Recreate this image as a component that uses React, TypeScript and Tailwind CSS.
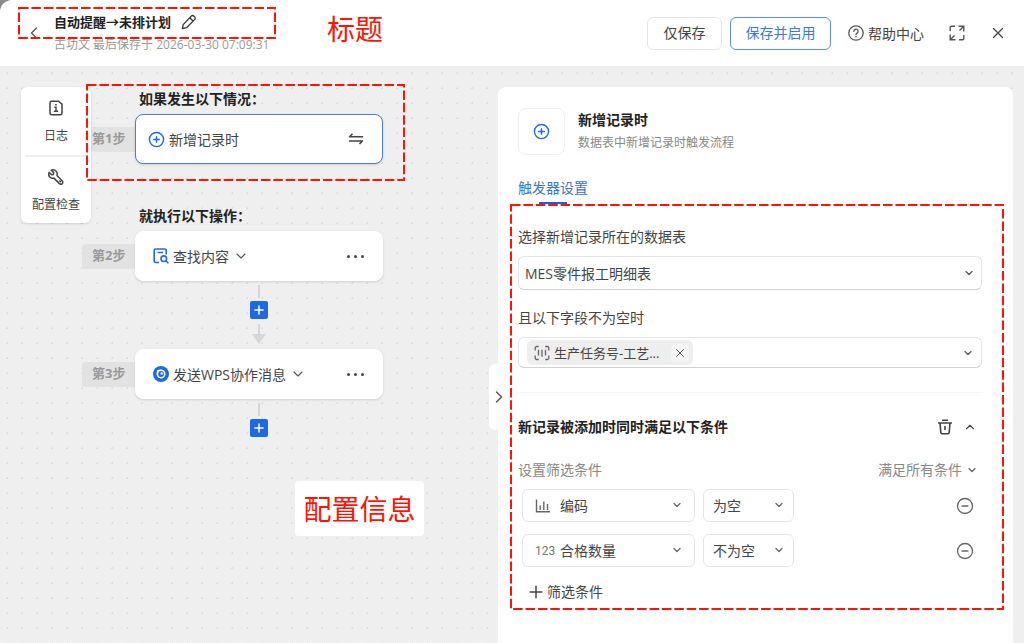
import type { ReactNode } from 'react';
import { ChevronDown, ChevronLeft, ChevronRight, ChevronUp, CircleMinus, CirclePlus, Plus, X } from 'lucide-react';

interface Condition {
  id: string;
  field: string;
  operator: string;
  icon: ReactNode;
}

function PencilIcon() {
  return (
    <svg className="w-4 h-4" viewBox="0 0 16 16" fill="none" stroke="#333" strokeWidth="1.3" strokeLinejoin="round">
      <path d="M1.4 14.6 2.2 10.6 10.4 2a1.6 1.6 0 0 1 2.3 0l1.1 1.1a1.6 1.6 0 0 1 0 2.3L5.5 13.7 1.4 14.6ZM8.8 3.8l3.2 3.2" />
    </svg>
  );
}

function HelpIcon() {
  return (
    <svg className="w-4 h-4" viewBox="0 0 16 16" fill="none" stroke="#555" strokeWidth="1.3" strokeLinecap="round">
      <circle cx="8" cy="8" r="7.2" />
      <path d="M5.9 6.4a2.1 2.1 0 1 1 3.2 1.7c-.7.5-1.1.8-1.1 1.5" />
      <path d="M8 11.5v.2" strokeWidth="1.5" />
    </svg>
  );
}

function ExpandIcon() {
  return (
    <svg className="w-4 h-4" viewBox="0 0 16 16" fill="none" stroke="#555" strokeWidth="1.4">
      <path d="M1.2 6V2.2a1 1 0 0 1 1-1H6M9.5 1.2h5.3v5.3M14.8 1.2 10.500 5.500M14.8 10v3.800a1 1 0 0 1-1 1H10M6.5 14.8H1.2V9.5M1.2 14.8 5.500 10.500" />
    </svg>
  );
}

function LogIcon() {
  return (
    <svg className="w-4 h-4" viewBox="0 0 16 16" fill="none" stroke="#444" strokeWidth="1.5">
      <path d="M3.5 1.2h7l3.5 3v9a1.5 1.5 0 0 1-1.5 1.5h-9A1.5 1.5 0 0 1 2 13.200V2.700a1.500 1.500 0 0 1 1.500-1.500Z" />
      <path d="M6.300 7.200H8v4M5.800 11.300h4.400M7.200 4.700h1.600" strokeWidth="1.400" />
    </svg>
  );
}

function WrenchIcon() {
  return (
    <svg className="w-4 h-4" viewBox="0 0 16 16" fill="none" stroke="#444" strokeWidth="1.5" strokeLinejoin="round">
      <path d="M3.300 1.200 5.700 3.600 5.400 5.400 3.600 5.700 1.200 3.300C.300 5.600.900 7.500 2.400 8.500c1 .8 2.300.9 3.500.6l5.500 5.500a1.900 1.900 0 0 0 2.900-2.700L9 6.400c.5-1.500.3-3-.8-4.100C6.900.9 5 .5 3.300 1.200Z" />
      <path d="m11.800 12 .6.600" strokeLinecap="round" />
    </svg>
  );
}

function SwapIcon() {
  return (
    <svg className="w-4 h-4" viewBox="0 0 16 16" fill="none" stroke="#444" strokeWidth="1.600" strokeLinejoin="round">
      <path d="M4.500 2.700 1.500 5.700H15M1 10h13.500l-3 3" />
    </svg>
  );
}

function SearchDocIcon() {
  return (
    <svg className="w-4 h-4" viewBox="0 0 16 16" fill="none" stroke="#1f6ae1" strokeWidth="1.600">
      <path d="M6 14.500H2.700A1.500 1.500 0 0 1 1.200 13V2.500A1.500 1.500 0 0 1 2.700 1h9a1.500 1.500 0 0 1 1.500 1.500V6.500M4.500 4.500H10" />
      <circle cx="10.800" cy="10.700" r="2.800" />
      <path d="m12.800 12.700 2.600 2.600" />
    </svg>
  );
}

function WpsIcon() {
  return (
    <svg className="w-4 h-4" viewBox="0 0 16 16" fill="none">
      <circle cx="8" cy="8" r="8" fill="#1f6ae1" />
      <path d="M4 4.200c1-.6 2.500-.8 4-.8a4.500 4.500 0 1 1-4.400 3.600c.2-1 .5-1.800.4-2.800Z" fill="#fff" />
      <circle cx="8.100" cy="8" r="2.900" fill="#1f6ae1" />
      <circle cx="8.700" cy="7.500" r="1.300" fill="#fff" />
    </svg>
  );
}

function BarcodeIcon() {
  return (
    <svg className="w-4 h-4" viewBox="0 0 16 16" fill="none" stroke="#666" strokeWidth="1.300">
      <path d="M1.200 5.500V3a1.500 1.500 0 0 1 1.500-1.500h2M11.300 1.500h2A1.500 1.500 0 0 1 14.800 3v2.500M14.800 10.500V13a1.500 1.500 0 0 1-1.500 1.500h-2M4.700 14.500h-2A1.500 1.500 0 0 1 1.200 13v-2.500" />
      <path d="M4.500 4.800v5.700M8 4.800v7M11.500 4.800v5.700" />
    </svg>
  );
}

function ChartIcon() {
  return (
    <svg className="w-4 h-4" viewBox="0 0 16 16" fill="none" stroke="#666" strokeWidth="1.400">
      <path d="M1.500 1.500v12.300H15M5.200 7.500v4.500M8.800 3.500V12M12.500 6v6" />
    </svg>
  );
}

function TrashIcon() {
  return (
    <svg className="w-4 h-4" viewBox="0 0 16 16" fill="none" stroke="#444" strokeWidth="1.600">
      <path d="M5 1.300h6M1 4h14M3 4l.8 9.500a1.300 1.300 0 0 0 1.300 1.200h5.800a1.300 1.300 0 0 0 1.300-1.200L13 4M8 7v4" />
    </svg>
  );
}

const conditions: Condition[] = [
  { id: 'code', field: '编码', operator: '为空', icon: <ChartIcon /> },
  { id: 'qty', field: '合格数量', operator: '不为空', icon: <span className="font-[Roboto] text-xs text-[#777]">123</span> },
];

// Red dashed frame drawn around an area worth pointing at
function Callout({ className }: { className: string }) {
  return (
    <div className={`absolute z-20 pointer-events-none ${className}`}>
      <svg className="w-full h-full overflow-visible" fill="none">
        <rect width="100%" height="100%" stroke="#fd1407" strokeWidth="2" strokeDasharray="9.500 2.900" />
      </svg>
    </div>
  );
}

function StepRow({ step, active, children }: { step: string; active?: boolean; children: ReactNode }) {
  return (
    <div className="flex items-center">
      <div className="w-[53px] h-[25px] pl-[10px] flex items-center rounded-l bg-[#e2e2e2] text-[13px] font-bold text-[#999]">
        {step}
      </div>
      <div className={`w-[248px] h-[50px] pr-[18px] flex items-center justify-between rounded-lg bg-white border shadow ${active ? 'border-[#4a7fd8] pl-3' : 'border-white pl-[17px]'}`}>
        {children}
      </div>
    </div>
  );
}

function AddStep() {
  return (
    <>
      <span className="w-0.5 h-[13px] mt-1 bg-[#d6d6d6]" />
      <button aria-label="添加步骤" className="w-[18px] h-[18px] mt-[3px] flex items-center justify-center rounded-xs bg-[#1f6ae1] text-white">
        <Plus className="w-[14px] h-[14px]" strokeWidth={2.5} />
      </button>
    </>
  );
}

function MoreButton() {
  return (
    <button aria-label="更多" className="flex gap-1">
      <span className="w-[3px] h-[3px] rounded-full bg-[#444]" />
      <span className="w-[3px] h-[3px] rounded-full bg-[#444]" />
      <span className="w-[3px] h-[3px] rounded-full bg-[#444]" />
    </button>
  );
}

function Header() {
  return (
    <header className="h-[66px] pl-[27px] pr-[17px] flex items-center bg-white rounded-tl-xl">
      <div className="relative h-full w-[248px] flex">
        <Callout className="-left-2 right-0 top-2 h-[30px]" />
        <button aria-label="返回" className="w-[27px] h-full">
          <ChevronLeft className="w-5 h-5 -ml-[3px] text-[#555]" strokeWidth={1.5} />
        </button>
        <div className="pt-[12px] whitespace-nowrap">
          <div className="flex items-center gap-[10px]">
            <h1 className="text-[13px] leading-5 font-bold text-[#222]">自动提醒→未排计划</h1>
            <button aria-label="重命名"><PencilIcon /></button>
          </div>
          <p className="mt-[3px] text-xs leading-5 text-[#999]">古功文 最后保存于 2026-03-30 07:09:31</p>
        </div>
      </div>
      <strong className="ml-[52px] mb-2 text-[28px] leading-9 font-normal text-[#fd1407] whitespace-nowrap">标题</strong>
      <div className="ml-auto flex items-center text-[14px] text-[#444] whitespace-nowrap">
        <button className="w-[75px] h-[33px] pb-0.5 rounded-md border border-[#e6e6e6]">仅保存</button>
        <button className="w-[101px] h-[33px] pb-0.5 ml-2 rounded-md border border-[#5b8fe0] text-[#3b78dc]">保存并启用</button>
        <button className="ml-[17px] flex items-center gap-1"><HelpIcon />帮助中心</button>
        <button aria-label="全屏" className="ml-[25px]"><ExpandIcon /></button>
        <button aria-label="关闭" className="ml-6"><X className="w-[18px] h-[18px] text-[#444]" strokeWidth={1.7} /></button>
      </div>
    </header>
  );
}

function SideTools() {
  return (
    <nav className="z-10 w-[70px] mt-[21px] px-1 shrink-0 self-start rounded-md bg-white shadow text-xs text-[#444]">
      <button className="w-full h-[68px] pt-1 flex flex-col items-center justify-center gap-[10px] leading-5">
        <LogIcon />
        日志
      </button>
      <button className="w-full h-[68px] pt-1 flex flex-col items-center justify-center gap-[10px] leading-5 border-t-2 border-[#eee]">
        <WrenchIcon />
        配置检查
      </button>
    </nav>
  );
}

function Flow() {
  return (
    <section className="w-[416px] -ml-[9px] pt-[23px] shrink-0 text-[#444]">
      <div className="relative">
        <Callout className="left-[5px] right-[94px] -top-1 h-[95px]" />
        <h2 className="pl-[57px] mb-[5px] text-[14px] leading-5 font-bold text-[#222]">如果发生以下情况：</h2>
        <StepRow step="第1步" active>
          <span className="flex items-center gap-1 text-[14px]">
            <CirclePlus className="w-[17px] h-[17px] text-[#1f6ae1]" strokeWidth={2} />
            新增记录时
          </span>
          <button aria-label="切换触发器"><SwapIcon /></button>
        </StepRow>
      </div>
      <h2 className="pl-[57px] mt-[42px] mb-[5px] text-[14px] leading-5 font-bold text-[#222]">就执行以下操作：</h2>
      <StepRow step="第2步">
        <button className="flex items-center gap-1 text-[14px]">
          <SearchDocIcon />
          查找内容
          <ChevronDown className="w-4 h-4 text-[#555]" strokeWidth={1.7} />
        </button>
        <MoreButton />
      </StepRow>
      <div className="w-[248px] h-[68px] ml-[53px] flex flex-col items-center">
        <AddStep />
        <svg className="w-[14px] h-5 mt-[5px]" viewBox="0 0 14 20" fill="#d6d6d6">
          <path d="M6 0h2v10h6l-7 10-7-10h6z" />
        </svg>
      </div>
      <StepRow step="第3步">
        <button className="flex items-center gap-1 text-[14px]">
          <WpsIcon />
          发送WPS协作消息
          <ChevronDown className="w-4 h-4 text-[#555]" strokeWidth={1.7} />
        </button>
        <MoreButton />
      </StepRow>
      <div className="w-[248px] ml-[53px] flex flex-col items-center">
        <AddStep />
      </div>
      <div className="w-[129px] h-[55px] pt-px mt-11 ml-[213px] flex items-center justify-center rounded bg-white text-[28px] text-[#fd1407]">
        配置信息
      </div>
    </section>
  );
}

function ConditionRow({ condition }: { condition: Condition }) {
  return (
    <div className="flex items-center mb-3 pl-1 text-[14px]">
      <div className="relative">
        <span className="absolute left-[13px] inset-y-0 flex items-center">{condition.icon}</span>
        <select aria-label="字段" className="w-[173px] h-[33px] pl-[37px] appearance-none rounded-md border border-[#e6e6e6] bg-transparent">
          <option>{condition.field}</option>
        </select>
        <ChevronDown className="absolute right-3 top-[10px] w-3 h-3 text-[#666] pointer-events-none" strokeWidth={2.5} />
      </div>
      <div className="relative ml-2">
        <select aria-label="条件" className="w-[91px] h-[33px] pl-[9px] appearance-none rounded-md border border-[#e6e6e6] bg-transparent">
          <option>{condition.operator}</option>
        </select>
        <ChevronDown className="absolute right-[9px] top-[10px] w-3 h-3 text-[#666] pointer-events-none" strokeWidth={2.5} />
      </div>
      <button aria-label="删除条件" className="ml-auto mr-2">
        <CircleMinus className="w-[18px] h-[18px] text-[#666]" strokeWidth={1.7} />
      </button>
    </div>
  );
}

function TriggerPanel() {
  return (
    <aside className="relative flex-1 min-w-[420px] mt-[21px] mr-[11px] pt-[21px] pl-5 pr-[31px] rounded-t-lg bg-white text-[#444]">
      <button aria-label="收起面板" className="absolute -left-[9px] top-[277px] w-5 h-[66px] flex items-center justify-center rounded-l-md bg-white">
        <ChevronRight className="w-5 h-5 shrink-0 text-[#555]" strokeWidth={1.7} />
      </button>
      <div className="flex gap-[13px]">
        <div className="w-[47px] h-[47px] flex items-center justify-center rounded-lg border border-[#f0f0f0]">
          <CirclePlus className="w-[17px] h-[17px] text-[#1f6ae1]" />
        </div>
        <div className="pt-[2px] leading-5">
          <h2 className="text-[14px] leading-5 font-bold text-[#222]">新增记录时</h2>
          <p className="mt-[3px] text-xs leading-5 text-[#888]">数据表中新增记录时触发流程</p>
        </div>
      </div>
      <button className="block mt-[23px] text-[14px] leading-5 text-[#3b74cc]">
        触发器设置
        <span className="block w-7 h-0.5 mt-1 mx-auto bg-[#1f5fd0]" />
      </button>

      <div className="relative pt-[23px] pb-[7px] text-[14px] leading-5">
        <Callout className="-left-[7px] -right-[21px] top-px bottom-0" />
        <label htmlFor="source" className="block mb-[9px]">选择新增记录所在的数据表</label>
        <div className="relative">
          <select id="source" className="block w-full h-[34px] pl-[6px] pt-0.5 appearance-none rounded-md border border-[#e4e4e4] border-b-[#d0d0d0] bg-transparent">
            <option>MES零件报工明细表</option>
          </select>
          <ChevronDown className="absolute right-[7px] top-[11px] w-3 h-3 text-[#555] pointer-events-none" strokeWidth={2.5} />
        </div>
        <p className="mt-[18px] mb-[9px]">且以下字段不为空时</p>
        <div className="h-[31px] pl-2 pr-[7px] flex items-center justify-between rounded-md border border-[#e4e4e4] border-b-[#d0d0d0]">
          <span className="w-[166px] h-[25px] pl-[7px] pr-1 flex items-center rounded-md bg-[#eee] text-[13px]">
            <BarcodeIcon />
            <span className="ml-1">生产任务号-工艺...</span>
            <button aria-label="移除字段" className="ml-auto p-0.5 bg-[#f4f4f4] rounded-sm">
              <X className="w-[14px] h-[14px] text-[#555]" strokeWidth={1.7} />
            </button>
          </span>
          <button aria-label="选择字段"><ChevronDown className="w-3 h-3 text-[#555]" strokeWidth={2.5} /></button>
        </div>
        <hr className="mt-6 border-[#f6f6f6]" />
        <div className="mt-6 flex items-center">
          <h3 className="font-bold text-[#222]">新记录被添加时同时满足以下条件</h3>
          <button aria-label="删除" className="ml-auto mr-[10px]"><TrashIcon /></button>
          <button aria-label="折叠" className="mr-[5px]"><ChevronUp className="w-[14px] h-[14px]" /></button>
        </div>
        <div className="mt-[23px] mb-[9px] flex items-center justify-between text-[14px] text-[#888]">
          <span>设置筛选条件</span>
          <button className="flex items-center gap-1 mr-1">满足所有条件<ChevronDown className="w-3 h-3 text-[#666]" strokeWidth={2.5} /></button>
        </div>
        {conditions.map((condition) => (
          <ConditionRow key={condition.id} condition={condition} />
        ))}
        <button className="mt-[15px] ml-2 flex items-center gap-px text-[14px]">
          <Plus className="w-5 h-5" strokeWidth={1.8} />
          筛选条件
        </button>
      </div>
    </aside>
  );
}

export default function App() {
  return (
    <div className="min-h-screen flex flex-col bg-[#8a8a8a] font-['Open_Sans','Noto_Sans_CJK_SC',sans-serif]">
      <Header />
      <main className="flex-1 flex pl-[21px] bg-[#efefef] bg-[radial-gradient(circle,#dcdcdc_1px,transparent_1px)] bg-size-[15px_15px]">
        <SideTools />
        <Flow />
        <TriggerPanel />
      </main>
    </div>
  );
}
